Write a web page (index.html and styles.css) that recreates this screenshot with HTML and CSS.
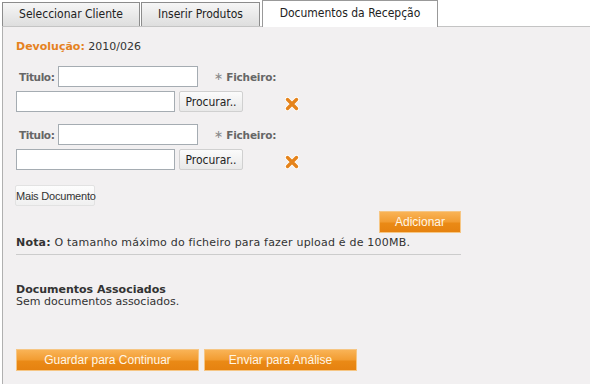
FILE: index.html
```html
<!DOCTYPE html>
<html lang="pt">
<head>
    <meta charset="UTF-8">
    <title>Documentos da Recepção</title>
    <link rel="stylesheet" href="styles.css">
</head>
<body>
    <div class="tabs">
        <div class="tab tab-cliente">Seleccionar Cliente</div>
        <div class="tab tab-produtos">Inserir Produtos</div>
        <div class="tab tab-docs active">Documentos da Recepção</div>
    </div>
    <div class="panel">
        <div class="devolucao"><b>Devolução:</b> 2010/026</div>

        <div class="doc">
            <div class="row-titulo">
                <label>Titulo:</label>
                <input type="text" class="titulo-input">
                <span class="req">∗</span><span class="ficheiro">Ficheiro:</span>
            </div>
            <div class="row-file">
                <input type="text" class="file-input">
                <button class="btn-browse">Procurar..</button>
                <svg class="remove" width="14" height="14" viewBox="0 0 14 14">
                    <path d="M2.5 2.5 L11.5 11.5 M11.5 2.5 L2.5 11.5" stroke="#fff" stroke-width="5" stroke-linecap="round"/>
                    <path d="M2.5 2.5 L11.5 11.5 M11.5 2.5 L2.5 11.5" stroke="#e5831b" stroke-width="3.4" stroke-linecap="round"/>
                </svg>
            </div>
        </div>

        <div class="doc">
            <div class="row-titulo">
                <label>Titulo:</label>
                <input type="text" class="titulo-input">
                <span class="req">∗</span><span class="ficheiro">Ficheiro:</span>
            </div>
            <div class="row-file">
                <input type="text" class="file-input">
                <button class="btn-browse">Procurar..</button>
                <svg class="remove" width="14" height="14" viewBox="0 0 14 14">
                    <path d="M2.5 2.5 L11.5 11.5 M11.5 2.5 L2.5 11.5" stroke="#fff" stroke-width="5" stroke-linecap="round"/>
                    <path d="M2.5 2.5 L11.5 11.5 M11.5 2.5 L2.5 11.5" stroke="#e5831b" stroke-width="3.4" stroke-linecap="round"/>
                </svg>
            </div>
        </div>

        <button class="btn-mais">Mais Documento</button>
        <button class="btn-orange btn-adicionar">Adicionar</button>

        <div class="nota"><b>Nota:</b> O tamanho máximo do ficheiro para fazer upload é de 100MB.</div>

        <div class="associados">
            <b>Documentos Associados</b><br>
            Sem documentos associados.
        </div>

        <div class="actions">
            <button class="btn-orange btn-guardar">Guardar para Continuar</button>
            <button class="btn-orange btn-enviar">Enviar para Análise</button>
        </div>
    </div>
</body>
</html>
```

FILE: styles.css
```css
body {
    margin: 0;
    font-family: "DejaVu Sans", Verdana, sans-serif;
    font-size: 11px;
    color: #333;
    background-color: #fff;
}
.tabs {
    display: flex;
    align-items: flex-end;
    height: 26px;
    padding-left: 2px;
}
.tab {
    box-sizing: border-box;
    height: 24px;
    line-height: 22px;
    text-align: center;
    font-family: "DejaVu Sans Condensed", "DejaVu Sans", sans-serif;
    font-size: 12px;
    color: #222;
    border: 1px solid #8c8c8c;
    border-bottom: none;
    background: linear-gradient(#f6f6f6, #dedede);
    margin-right: 1px;
}
.tab-cliente {
    width: 138px;
}
.tab-produtos {
    width: 119px;
    margin-right: 2px;
}
.tab-docs {
    width: 176px;
}
.tab.active {
    height: 27px;
    line-height: 25px;
    background: #fff;
    border-color: #999;
    margin-bottom: -1px;
    position: relative;
}
.panel {
    box-sizing: border-box;
    height: 358px;
    margin-left: 2px;
    padding: 13px 0 0 13px;
    background-color: #f2f0f1;
    border-top: 1px solid #c4c4c4;
    border-left: 1px solid #b0b0b0;
}
.devolucao {
    line-height: 13px;
}
.devolucao b {
    color: #e5821f;
}
.doc {
    margin-top: 13px;
}
.doc + .doc {
    margin-top: 12px;
}
.row-titulo,
.row-file {
    display: flex;
    align-items: center;
    height: 21px;
}
.row-file {
    margin-top: 4px;
}
.row-titulo label {
    box-sizing: border-box;
    width: 42px;
    padding-left: 3px;
    font-size: 10.5px;
    font-weight: bold;
    letter-spacing: -0.4px;
    color: #666;
}
input[type="text"] {
    box-sizing: border-box;
    height: 21px;
    border: 1px solid #a5acb2;
    background: #fff;
    margin: 0;
}
.titulo-input {
    width: 140px;
}
.req {
    margin-left: 16px;
    color: #888;
    font-size: 11px;
}
.ficheiro {
    margin-left: 3px;
    font-size: 10.5px;
    font-weight: bold;
    letter-spacing: -0.2px;
    color: #666;
}
.file-input {
    width: 159px;
}
.btn-browse {
    box-sizing: border-box;
    width: 64px;
    height: 21px;
    margin-left: 4px;
    padding: 0;
    font-family: "DejaVu Sans Condensed", "DejaVu Sans", sans-serif;
    font-size: 12px;
    color: #222;
    border: 1px solid #d0d0d0;
    border-radius: 2px;
    background: linear-gradient(#fbfbfb, #e9e9e9);
}
.remove {
    margin-left: 42px;
    margin-top: 4px;
}
.btn-mais {
    display: block;
    box-sizing: border-box;
    width: 80px;
    height: 21px;
    margin: 15px 0 0 -1px;
    padding: 0;
    white-space: nowrap;
    font-family: "Liberation Sans", Arial, sans-serif;
    font-size: 11px;
    letter-spacing: -0.2px;
    color: #333;
    border: 1px solid #e2e2e2;
    border-radius: 2px;
    background: linear-gradient(#fdfdfd, #f0f0f0);
}
.btn-orange {
    display: block;
    box-sizing: border-box;
    height: 22px;
    padding: 0;
    font-family: "Liberation Sans", Arial, sans-serif;
    font-size: 12px;
    color: #fff6e6;
    border: 1px solid #f6c684;
    background: linear-gradient(#f9b356, #f29c31 50%, #ea8a16 55%, #e68210);
}
.btn-adicionar {
    width: 82px;
    margin: 5px 0 0 363px;
}
.nota {
    width: 445px;
    padding: 3px 0 5px;
    line-height: 13px;
    letter-spacing: 0.2px;
    border-bottom: 1px solid #ccc;
}
.associados {
    margin-top: 29px;
    line-height: 12px;
}
.actions {
    display: flex;
    gap: 5px;
    margin-top: 41px;
}
.btn-guardar {
    width: 183px;
}
.btn-enviar {
    width: 153px;
}
```
